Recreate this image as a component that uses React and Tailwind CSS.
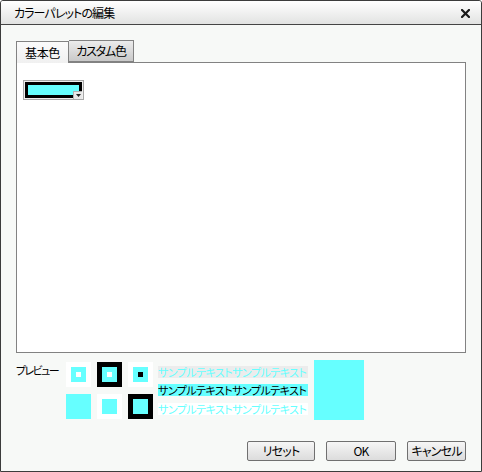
import React from 'react';

const jp = "font-['Meiryo_UI','Noto_Sans_CJK_JP',sans-serif] [font-feature-settings:'palt']";

function Square({ outer, inner, center }) {
  return (
    <div className={`w-[25px] h-[25px] flex items-center justify-center ${outer}`}>
      {inner && (
        <div className={`w-[15px] h-[15px] flex items-center justify-center ${inner}`}>
          {center && <div className={`w-[5px] h-[5px] ${center}`} />}
        </div>
      )}
    </div>
  );
}

function Button({ label, width }) {
  return (
    <button
      className={`${width} h-[20px] rounded-[2px] border border-[#707070] bg-gradient-to-b from-[#f6f6f6] to-[#dcdcdc] text-[12px] leading-none tracking-[-0.8px] text-black`}
    >
      {label}
    </button>
  );
}

const sample = 'サンプルテキストサンプルテキスト';

export default function App() {
  return (
    <div className={`w-[482px] h-[472px] flex flex-col bg-[#f7f9f7] border border-[#3c3c3c] rounded-t-[3px] overflow-hidden ${jp}`}>
      {/* Title bar */}
      <div className="h-[24px] shrink-0 flex items-center justify-between pl-[13px] pr-[11px] bg-gradient-to-b from-[#ffffff] to-[#e2e3e2] border-b border-[#454545]">
        <span className="text-[12px] leading-none tracking-[-0.9px] text-black">カラーパレットの編集</span>
        <svg width="9" height="9" viewBox="0 0 9 9" className="mt-[1px]">
          <path d="M1 1L8 8M8 1L1 8" stroke="#1a1a1a" strokeWidth="2.2" strokeLinecap="square" />
        </svg>
      </div>

      <div className="flex-1 flex flex-col px-[15px] pt-[15px]">
        {/* Tabs */}
        <div className="flex h-[22px] items-end">
          <div className="w-[53px] h-[22px] flex items-center justify-center border border-b-0 border-[#828282] bg-gradient-to-b from-[#fbfbfb] to-[#f0f0f0] text-[12px] tracking-[-0.3px] text-black relative top-px">
            基本色
          </div>
          <div className="w-[65px] h-[22px] flex items-center justify-center border border-l-0 border-[#828282] bg-gradient-to-b from-[#ececec] to-[#c9c9c9] text-[12px] tracking-[-1.2px] text-black">
            カスタム色
          </div>
        </div>

        {/* Panel */}
        <div className="h-[291px] border border-[#828282] bg-white pl-[6px] pt-[17px]">
          <div className="relative w-[61px] h-[20px] border border-[#a8a8a8] bg-[#eeeeee] p-px">
            <div className="w-full h-full border-[3px] border-black bg-[#66ffff]" />
            <div className="absolute right-[1px] bottom-[0px] w-[9px] h-[8px] bg-[#e8e8e8] border-l border-t border-[#b0b0b0] flex items-center justify-center">
              <svg width="5" height="3" viewBox="0 0 5 3">
                <path d="M0 0H5L2.5 3Z" fill="#222" />
              </svg>
            </div>
          </div>
        </div>

        {/* Preview */}
        <div className="flex mt-[9px]">
          <div className="w-[50px] pt-[3px] text-[11px] leading-none tracking-[-1.6px] whitespace-nowrap text-black">プレビュー</div>
          <div className="grid grid-cols-[25px_25px_25px] gap-[6px]">
            <Square outer="bg-white" inner="bg-[#66ffff]" center="bg-white" />
            <Square outer="bg-black" inner="bg-[#66ffff]" center="bg-white" />
            <Square outer="bg-white" inner="bg-[#66ffff]" center="bg-black" />
            <Square outer="bg-[#66ffff]" />
            <Square outer="bg-white" inner="bg-[#66ffff]" />
            <Square outer="bg-black" inner="bg-[#66ffff]" />
          </div>
          <div className="w-[150px] flex flex-col ml-[5px] pt-[4px]">
            <div className="h-[12px] flex items-center bg-[#ececec] text-[11px] leading-none tracking-[-0.55px] text-[#66ffff] whitespace-nowrap">
              {sample}
            </div>
            <div className="h-[12px] mt-[6px] flex items-center bg-[#66ffff] text-[11px] leading-none tracking-[-0.55px] text-black whitespace-nowrap">
              {sample}
            </div>
            <div className="h-[12px] mt-[7px] flex items-center bg-white text-[11px] leading-none tracking-[-0.55px] text-[#66ffff] whitespace-nowrap">
              {sample}
            </div>
          </div>
          <div className="w-[50px] h-[60px] ml-[6px] -mt-[2px] bg-[#66ffff]" />
        </div>

        {/* Buttons */}
        <div className="flex justify-end gap-[11px] mt-[21px]">
          <Button label="リセット" width="w-[68px]" />
          <Button label="OK" width="w-[70px]" />
          <Button label="キャンセル" width="w-[59px]" />
        </div>
      </div>
    </div>
  );
}
